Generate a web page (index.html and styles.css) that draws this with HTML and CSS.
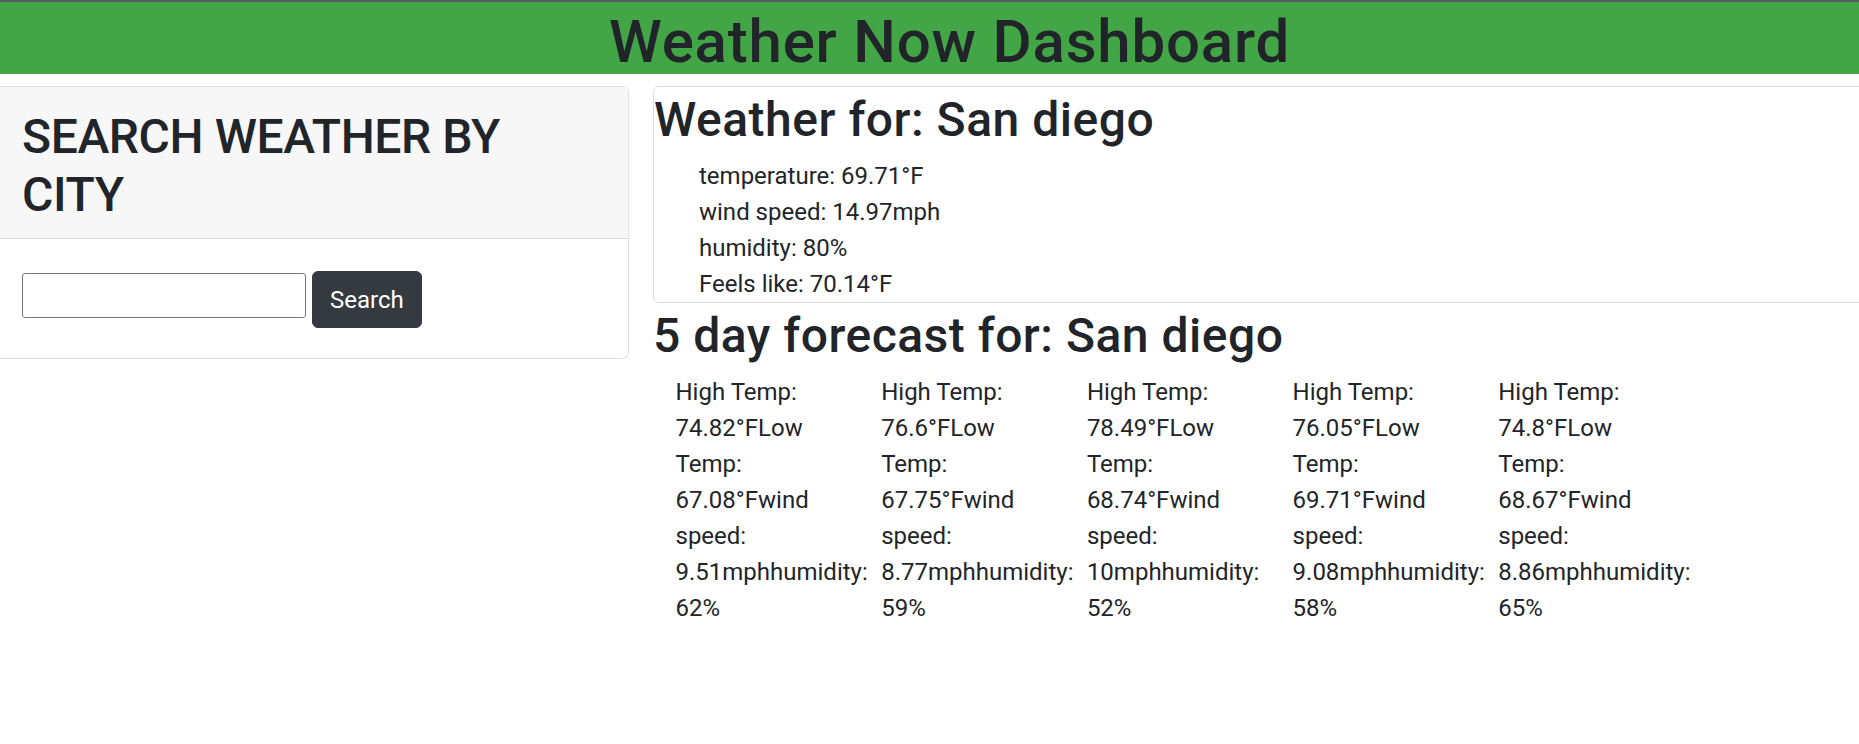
FILE: index.html
```html
<!DOCTYPE html>
<html lang="en">
<head>
<meta charset="utf-8">
<title>Weather Now Dashboard</title>
<link rel="stylesheet" href="styles.css">
</head>
<body>
<header class="topbar">
  <h1 class="topbar-title">Weather Now Dashboard</h1>
</header>
<main class="layout">
  <aside class="search-card">
    <div class="search-head">
      <h2 class="search-title">SEARCH WEATHER BY CITY</h2>
    </div>
    <div class="search-body">
      <input class="search-input" type="text" aria-label="City">
      <button class="search-btn" type="button">Search</button>
    </div>
  </aside>
  <section class="results">
    <div class="current-card">
      <h2 class="section-title">Weather for: San diego</h2>
      <ul class="current-list">
        <li>temperature: 69.71°F</li>
        <li>wind speed: 14.97mph</li>
        <li>humidity: 80%</li>
        <li>Feels like: 70.14°F</li>
      </ul>
    </div>
    <h2 class="section-title">5 day forecast for: San diego</h2>
    <div class="forecast">
      <div class="day">High Temp: 74.82°FLow Temp: 67.08°Fwind speed: 9.51mphhumidity: 62%</div>
      <div class="day">High Temp: 76.6°FLow Temp: 67.75°Fwind speed: 8.77mphhumidity: 59%</div>
      <div class="day">High Temp: 78.49°FLow Temp: 68.74°Fwind speed: 10mphhumidity: 52%</div>
      <div class="day">High Temp: 76.05°FLow Temp: 69.71°Fwind speed: 9.08mphhumidity: 58%</div>
      <div class="day">High Temp: 74.8°FLow Temp: 68.67°Fwind speed: 8.86mphhumidity: 65%</div>
    </div>
  </section>
</main>
</body>
</html>
```
FILE: styles.css
```css
* { box-sizing: border-box; }
html, body { overflow: hidden; }
body {
  margin: 0;
  font-family: Roboto, "Noto Sans", sans-serif;
  font-size: 24px;
  line-height: 1.5;
  color: #212529;
  background: #fff;
}
.topbar {
  background: #42a646;
  border-top: 2px solid #565b5d;
  text-align: center;
  padding-left: 40px;
}
.topbar-title {
  margin: 0;
  padding-top: 8px;
  font-size: 60px;
  font-weight: 500;
  line-height: 64px;
  letter-spacing: 0.8px;
}
.layout {
  display: flex;
  align-items: flex-start;
  gap: 24px;
  margin-top: 12px;
}
.search-card {
  flex: 0 0 629px;
  border: 1px solid #dfdfdf;
  border-left: none;
  border-radius: 0 6px 6px 0;
}
.search-head {
  background: #f7f7f7;
  border-bottom: 1px solid #dfdfdf;
  padding: 21px 22px 15px;
}
.search-title {
  margin: 0;
  font-size: 48px;
  font-weight: 500;
  line-height: 57.6px;
  letter-spacing: -0.4px;
  max-width: 540px;
}
.search-body {
  display: flex;
  align-items: flex-start;
  gap: 6px;
  padding: 32px 22px 30px;
}
.search-input {
  width: 284px;
  height: 45px;
  margin-top: 2px;
  border: 1px solid #767676;
  border-radius: 3px;
  font: inherit;
}
.search-btn {
  font: inherit;
  line-height: 36px;
  color: #fff;
  background: #343a40;
  border: 1px solid #343a40;
  border-radius: 6px;
  padding: 9.5px 17px;
}
.results {
  flex: 0 0 1300px;
}
.current-card {
  border: 1px solid #dfdfdf;
  border-radius: 6px;
}
.section-title {
  margin: 0 0 12px;
  padding-top: 8px;
  font-size: 48px;
  font-weight: 500;
  line-height: 49.6px;
  letter-spacing: 0.5px;
}
.current-list {
  list-style: none;
  margin: 0;
  padding: 1px 0 0 45px;
  line-height: 36px;
}
.forecast {
  display: flex;
  padding-top: 2px;
}
.day {
  flex: 0 0 205.7px;
  min-width: 0;
  padding: 0 22.5px;
  line-height: 36px;
}
```
